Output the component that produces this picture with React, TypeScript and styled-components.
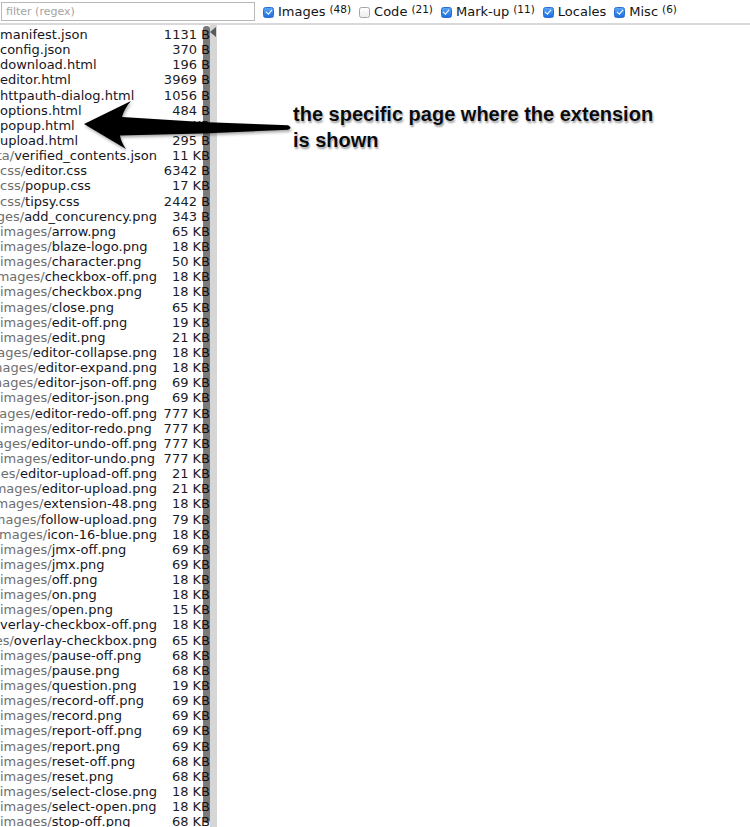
import { useState } from "react";
import styled, { createGlobalStyle } from "styled-components";

const GlobalStyle = createGlobalStyle`
  html, body {
    margin: 0;
    padding: 0;
    background: #fff;
  }
  body {
    font-family: "DejaVu Sans", "Noto Sans", sans-serif;
    font-size: 13px;
    color: #111;
    overflow: hidden;
  }
`;

const Page = styled.div`
  height: 827px;
  display: flex;
  flex-direction: column;
  position: relative;
  overflow: hidden;
`;

const Toolbar = styled.header`
  height: 23px;
  flex-shrink: 0;
  display: flex;
  align-items: center;
  padding-left: 1px;
  border-bottom: 2px solid #d9d9d9;
`;

const Filter = styled.input`
  box-sizing: border-box;
  width: 254px;
  height: 19px;
  margin: 0;
  border: 1px solid #b8b8b8;
  padding: 0 4px;
  font: 11px "DejaVu Sans", sans-serif;
  color: #333;
  outline: none;

  &::placeholder {
    color: #a3a3a3;
  }
`;

const Toggle = styled.label`
  display: flex;
  align-items: center;
  margin-left: 8px;
  font-size: 13px;
  color: #141414;
  white-space: nowrap;
`;

const Box = styled.input`
  appearance: none;
  box-sizing: border-box;
  width: 11px;
  height: 11px;
  margin: 1px 4px 0 0;
  border-radius: 2.5px;
  position: relative;
  border: 1px solid #a5a5a5;
  background: linear-gradient(#fff, #ededed);

  &:checked {
    border-color: #2a6ccf;
    background: linear-gradient(#5aa5f7, #1e6fde);
  }

  &:checked::after {
    content: "";
    position: absolute;
    left: 2.5px;
    top: 0.5px;
    width: 2.5px;
    height: 5px;
    border: solid #fff;
    border-width: 0 1.6px 1.6px 0;
    transform: rotate(40deg);
  }
`;

const Count = styled.sup`
  font-size: 10.5px;
  line-height: 1;
  margin-left: 4px;
  position: relative;
  top: -2px;
`;

const Body = styled.div`
  flex: 1;
  display: flex;
  min-height: 0;
`;

const ListPane = styled.div`
  width: 210px;
  flex-shrink: 0;
  position: relative;
  overflow: hidden;
  padding-top: 2px;
`;

const Row = styled.div`
  display: flex;
  height: 15.15px;
  line-height: 15px;
`;

const Name = styled.div`
  width: 157px;
  flex-shrink: 0;
  overflow: hidden;
  white-space: nowrap;
  direction: rtl;
  text-align: left;
`;

const Path = styled.span`
  direction: ltr;
  unicode-bidi: isolate;
`;

const Dir = styled.span`
  color: #6e6e6e;
`;

const File = styled.span`
  color: #16161e;
`;

const Size = styled.div`
  flex: 1;
  text-align: right;
  white-space: nowrap;
  color: #1c1c24;
`;

const Thumb = styled.div`
  position: absolute;
  top: 1px;
  bottom: 4px;
  right: 0;
  width: 7px;
  border-radius: 3px;
  background: rgba(0, 0, 0, 0.52);
`;

const Splitter = styled.div`
  width: 7px;
  flex-shrink: 0;
  background: #d6d6d6;
`;

const Grip = styled.div`
  width: 0;
  height: 0;
  margin-top: 2px;
  border-top: 5px solid transparent;
  border-bottom: 5px solid transparent;
  border-right: 6px solid #5a5a5a;
`;

const Preview = styled.div`
  flex: 1;
  background: #fff;
`;

const Arrow = styled.svg`
  position: absolute;
  left: 0;
  top: 0;
  pointer-events: none;
  filter: drop-shadow(1px 2px 1.5px rgba(0, 0, 0, 0.35));
`;

const Callout = styled.div`
  position: absolute;
  left: 293px;
  top: 101px;
  width: 380px;
  font: bold 20px/26px "Liberation Sans", Arial, sans-serif;
  color: #0a0a0a;
  text-shadow: 0 0 1px #fff, 1px 2px 2px rgba(0, 0, 0, 0.4);
  pointer-events: none;
`;

interface FileEntry {
  path: string;
  size: string;
}

const files: FileEntry[] = [
  { path: "manifest.json", size: "1131 B" },
  { path: "config.json", size: "370 B" },
  { path: "download.html", size: "196 B" },
  { path: "editor.html", size: "3969 B" },
  { path: "httpauth-dialog.html", size: "1056 B" },
  { path: "options.html", size: "484 B" },
  { path: "popup.html", size: "3 KB" },
  { path: "upload.html", size: "295 B" },
  { path: "_metadata/verified_contents.json", size: "11 KB" },
  { path: "css/editor.css", size: "6342 B" },
  { path: "css/popup.css", size: "17 KB" },
  { path: "css/tipsy.css", size: "2442 B" },
  { path: "images/add_concurency.png", size: "343 B" },
  { path: "images/arrow.png", size: "65 KB" },
  { path: "images/blaze-logo.png", size: "18 KB" },
  { path: "images/character.png", size: "50 KB" },
  { path: "images/checkbox-off.png", size: "18 KB" },
  { path: "images/checkbox.png", size: "18 KB" },
  { path: "images/close.png", size: "65 KB" },
  { path: "images/edit-off.png", size: "19 KB" },
  { path: "images/edit.png", size: "21 KB" },
  { path: "images/editor-collapse.png", size: "18 KB" },
  { path: "images/editor-expand.png", size: "18 KB" },
  { path: "images/editor-json-off.png", size: "69 KB" },
  { path: "images/editor-json.png", size: "69 KB" },
  { path: "images/editor-redo-off.png", size: "777 KB" },
  { path: "images/editor-redo.png", size: "777 KB" },
  { path: "images/editor-undo-off.png", size: "777 KB" },
  { path: "images/editor-undo.png", size: "777 KB" },
  { path: "images/editor-upload-off.png", size: "21 KB" },
  { path: "images/editor-upload.png", size: "21 KB" },
  { path: "images/extension-48.png", size: "18 KB" },
  { path: "images/follow-upload.png", size: "79 KB" },
  { path: "images/icon-16-blue.png", size: "18 KB" },
  { path: "images/jmx-off.png", size: "69 KB" },
  { path: "images/jmx.png", size: "69 KB" },
  { path: "images/off.png", size: "18 KB" },
  { path: "images/on.png", size: "18 KB" },
  { path: "images/open.png", size: "15 KB" },
  { path: "images/overlay-checkbox-off.png", size: "18 KB" },
  { path: "images/overlay-checkbox.png", size: "65 KB" },
  { path: "images/pause-off.png", size: "68 KB" },
  { path: "images/pause.png", size: "68 KB" },
  { path: "images/question.png", size: "19 KB" },
  { path: "images/record-off.png", size: "69 KB" },
  { path: "images/record.png", size: "69 KB" },
  { path: "images/report-off.png", size: "69 KB" },
  { path: "images/report.png", size: "69 KB" },
  { path: "images/reset-off.png", size: "68 KB" },
  { path: "images/reset.png", size: "68 KB" },
  { path: "images/select-close.png", size: "18 KB" },
  { path: "images/select-open.png", size: "18 KB" },
  { path: "images/stop-off.png", size: "68 KB" },
  { path: "images/stop.png", size: "68 KB" },
];

const categories = [
  { label: "Images", count: 48, on: true },
  { label: "Code", count: 21, on: false },
  { label: "Mark-up", count: 11, on: true },
  { label: "Locales", count: 0, on: true },
  { label: "Misc", count: 6, on: true },
];

const splitPath = (path: string) => {
  const cut = path.lastIndexOf("/") + 1;
  return [path.slice(0, cut), path.slice(cut)];
};

const App = () => {
  const [filter, setFilter] = useState("");
  const [checked, setChecked] = useState(categories.map((c) => c.on));

  const toggle = (i: number) =>
    setChecked((prev) => prev.map((v, j) => (j === i ? !v : v)));

  return (
    <>
      <GlobalStyle />
      <Page>
        <Toolbar>
          <Filter
            placeholder="filter (regex)"
            value={filter}
            onChange={(e) => setFilter(e.target.value)}
          />
          {categories.map((c, i) => (
            <Toggle key={c.label}>
              <Box
                type="checkbox"
                checked={checked[i]}
                onChange={() => toggle(i)}
              />
              {c.label}
              {c.count > 0 && <Count>({c.count})</Count>}
            </Toggle>
          ))}
        </Toolbar>
        <Body>
          <ListPane>
            {files.map((f) => {
              const [dir, name] = splitPath(f.path);
              return (
                <Row key={f.path}>
                  <Name>
                    <Path>
                      <Dir>{dir}</Dir>
                      <File>{name}</File>
                    </Path>
                  </Name>
                  <Size>{f.size}</Size>
                </Row>
              );
            })}
            <Thumb />
          </ListPane>
          <Splitter>
            <Grip />
          </Splitter>
          <Preview />
        </Body>

        <Arrow width="300" height="170" viewBox="0 0 300 170">
          <path
            d="M84,124 L131,101 Q124,109 122,117 L202,122 L288,125.2 Q293,127.5 288,129.8 L202,133.5 L120,135.5 Q121,142 126,149 Z"
            fill="#000"
          />
        </Arrow>
        <Callout>the specific page where the extension is shown</Callout>
      </Page>
    </>
  );
};

export default App;
